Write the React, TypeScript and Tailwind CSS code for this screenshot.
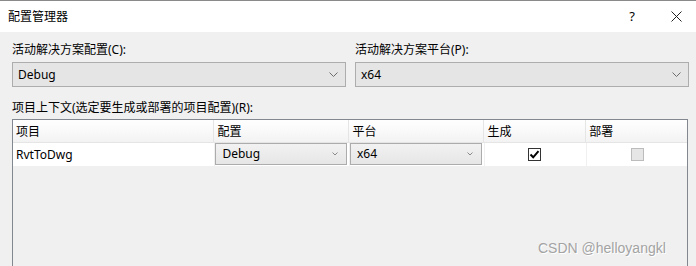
const font = "font-['Noto_Sans','Noto_Sans_CJK_SC',sans-serif]";

const Chevron = ({ small }: { small?: boolean }) =>
  small ? (
    <svg width="6" height="4" viewBox="0 0 6 4" className="shrink-0">
      <path d="M0.5 0.5 L3 3 L5.5 0.5" fill="none" stroke="#8a8a8a" strokeWidth="1" />
    </svg>
  ) : (
    <svg width="9" height="5" viewBox="0 0 9 5" className="shrink-0">
      <path d="M0.5 0.5 L4.5 4.5 L8.5 0.5" fill="none" stroke="#6d6d6d" strokeWidth="1" />
    </svg>
  );

const ComboBox = ({ value }: { value: string }) => (
  <div className="h-[25px] border border-[#adadad] bg-[#e5e5e5] flex items-center justify-between pl-[5px] pr-[7px] text-[12px] text-black">
    <span>{value}</span>
    <Chevron />
  </div>
);

const CellCombo = ({ value }: { value: string }) => (
  <div className="h-[22px] border border-[#acacac] bg-gradient-to-b from-[#f2f2f2] to-[#e6e6e6] flex items-center justify-between pl-[6px] pr-[8px] text-[12px] text-black">
    <span>{value}</span>
    <Chevron small />
  </div>
);

const headers = [
  { label: "项目", w: "w-[202px]" },
  { label: "配置", w: "w-[134px]" },
  { label: "平台", w: "w-[134px]" },
  { label: "生成", w: "w-[100px]" },
  { label: "部署", w: "w-[100px]" },
];

const App = () => {
  return (
    <div className={`w-[696px] h-[266px] overflow-hidden bg-[#f0f0f0] relative ${font}`}>
      <div className="h-[32px] bg-white border-t border-[#8a8a8a] flex items-center justify-between pl-[8px] pr-[14px]">
        <span className="text-[12px] text-black">配置管理器</span>
        <div className="flex items-center gap-[36px]">
          <span className="text-[13px] text-black leading-none">?</span>
          <svg width="11" height="11" viewBox="0 0 11 11">
            <path d="M0.5 0.5 L10.5 10.5 M10.5 0.5 L0.5 10.5" stroke="#222" strokeWidth="1" />
          </svg>
        </div>
      </div>

      <div className="pl-[12px] pt-[10px]">
        <div className="grid grid-cols-[334px_334px] gap-[9px]">
          <div>
            <div className="h-[16px] leading-[16px] text-[12px] text-black mb-[4px]">活动解决方案配置(C):</div>
            <ComboBox value="Debug" />
          </div>
          <div>
            <div className="h-[16px] leading-[16px] text-[12px] text-black mb-[4px]">活动解决方案平台(P):</div>
            <ComboBox value="x64" />
          </div>
        </div>

        <div className="mt-[13px] h-[16px] leading-[16px] text-[12px] text-black">
          项目上下文(选定要生成或部署的项目配置)(R):
        </div>

        <div className="mt-[3px] w-[676px] h-[160px] border border-[#828790] bg-[#f0f0f0]">
          <div className="flex h-[23px] border-b border-[#e5e5e5] bg-gradient-to-b from-white to-[#f3f3f3]">
            {headers.map((h, i) => (
              <div
                key={h.label}
                className={`${h.w} ${i > 0 ? "border-l border-[#e5e5e5]" : ""} box-content flex items-center pl-[3px] pt-[1px] text-[12px] text-black`}
              >
                {h.label}
              </div>
            ))}
          </div>
          <div className="flex h-[23px] bg-white text-[12px] text-black">
            <div className="w-[202px] flex items-center pl-[3px]">RvtToDwg</div>
            <div className="w-[134px] box-content border-l border-[#f0f0f0]">
              <div className="w-[132px]">
                <CellCombo value="Debug" />
              </div>
            </div>
            <div className="w-[134px] box-content border-l border-[#f0f0f0]">
              <div className="w-[132px]">
                <CellCombo value="x64" />
              </div>
            </div>
            <div className="w-[100px] box-content border-l border-[#f0f0f0] flex items-center justify-center pr-[2px]">
              <div className="w-[13px] h-[13px] border border-[#333] bg-white flex items-center justify-center">
                <svg width="11" height="11" viewBox="0 0 11 11">
                  <path d="M1.5 5.5 L4.2 8.3 L9.5 2.2" fill="none" stroke="#000" strokeWidth="2" />
                </svg>
              </div>
            </div>
            <div className="w-[100px] box-content border-l border-[#f0f0f0] flex items-center justify-center">
              <div className="w-[13px] h-[13px] border border-[#bcbcbc] bg-[#e6e6e6]" />
            </div>
          </div>
        </div>
      </div>

      <div className="absolute left-[538px] top-[238px] text-[14px] text-[#a3a3a3] [text-shadow:1px_1px_0_#ffffff] font-['Liberation_Sans',sans-serif]">
        CSDN @helloyangkl
      </div>
    </div>
  );
};

export default App;
